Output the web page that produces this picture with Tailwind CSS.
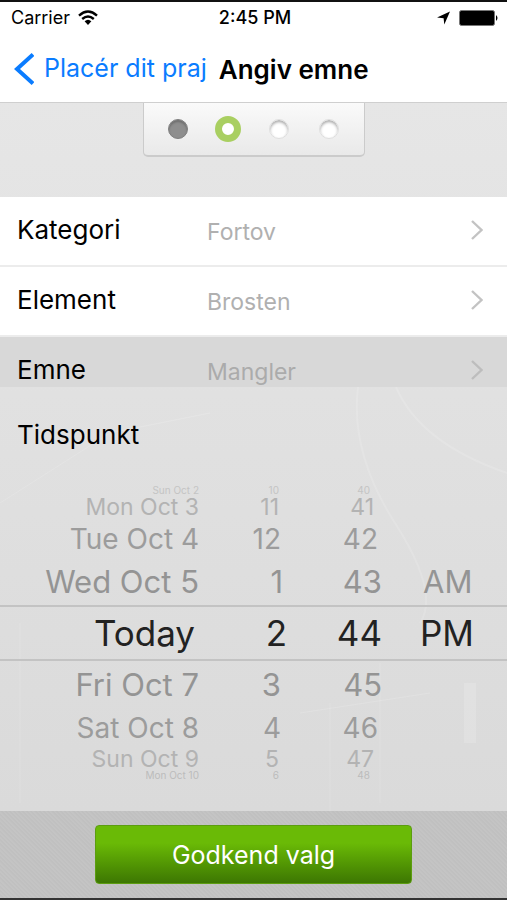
<!DOCTYPE html>
<html lang="da">
<head>
<meta charset="utf-8">
<meta name="viewport" content="width=device-width, initial-scale=1">
<title>Angiv emne</title>
<script src="https://cdn.jsdelivr.net/npm/@tailwindcss/browser@4"></script>
</head>
<body class="flex min-h-screen flex-col border-y-2 border-t-[#111] border-b-[#333] bg-[#dedede] font-['Inter',sans-serif] text-black">
<header class="border-b border-[#cfcfcf] bg-white">
  <div class="grid h-8 grid-cols-3 items-center pr-2 pl-[11px] text-[18px] leading-8">
    <div class="flex items-center gap-2">
      <span>Carrier</span>
      <svg class="h-4 w-5" viewBox="0 0 20 16" fill="none" stroke="#000" stroke-width="2.4" aria-label="Wi-Fi"><path d="M1 5.6Q10-2.4 19 5.6M4.2 9Q10 4 15.8 9"/><path d="M6.6 11.2Q10 8.2 13.4 11.2L10 15Z" fill="#000" stroke="none"/></svg>
    </div>
    <span class="text-center font-medium whitespace-nowrap">2:45 PM</span>
    <div class="flex items-center justify-end gap-2">
      <svg class="h-4 w-4" viewBox="0 0 16 16" aria-label="Lokation"><path d="M15 1.5L9.3 14.5L8.6 8.2L2 7.6Z"/></svg>
      <svg class="h-4 w-10" viewBox="0 0 40 16" aria-label="Batteri"><rect x=".5" y=".5" width="35" height="15" rx="2" stroke="#777"/><path d="M37 5q3 3 0 6z"/></svg>
    </div>
  </div>
  <nav class="flex h-[68px] items-center gap-3 pt-[2px] pl-[14px] whitespace-nowrap">
    <a href="#" class="flex items-center gap-[10px] text-[25px] text-[#0a7cff]">
      <svg class="h-8 w-5" viewBox="0 0 20 32" fill="none" stroke="currentColor" stroke-width="4"><path d="M19 1.5L3 16L19 30.5"/></svg>
      Placér dit praj
    </a>
    <h1 class="text-[26px] font-semibold">Angiv emne</h1>
  </nav>
</header>

<main class="relative isolate flex flex-1 flex-col bg-linear-to-b from-[#e6e6e6] to-[#dadada]">
  <svg class="absolute inset-0 -z-10 h-full w-full" viewBox="0 0 507 708" preserveAspectRatio="none" fill="none" stroke="#fff" stroke-opacity=".14" aria-hidden="true">
    <path d="M396 284Q420 340 507 370M358 284Q350 350 395 420T420 520" stroke-width="2"/>
    <path d="M0 400L110 330L210 310M300 610L430 590M380 560V700M330 600V708M20 520V700"/>
    <path d="M470 580V640" stroke-width="12"/>
  </svg>

  <div class="h-[94px]">
    <ol class="mx-auto flex h-[54px] w-[222px] items-center justify-between rounded-b-[5px] border border-t-0 border-b-2 border-[#cbcbcb] bg-linear-to-b from-[#fafafa] to-[#e9e9e9] px-[21px]" aria-label="Trin 2 af 4">
      <li class="flex w-[26px] justify-center"><span class="size-5 rounded-full border border-[#808080] bg-[#8e8e8e] shadow-[inset_0_2px_2px_#707070]"></span></li>
      <li class="flex w-[26px] justify-center"><span class="size-[26px] rounded-full border-[7px] border-[#a9cf61] bg-white"></span></li>
      <li class="flex w-[26px] justify-center"><span class="size-5 rounded-full border border-[#dedede] bg-white shadow-[inset_0_2px_3px_#aaa]"></span></li>
      <li class="flex w-[26px] justify-center"><span class="size-5 rounded-full border border-[#dedede] bg-white shadow-[inset_0_2px_3px_#aaa]"></span></li>
    </ol>
  </div>

  <div class="text-[26px] leading-8">
    <a href="#" class="flex h-[70px] items-center border-b-2 border-[#ececec] bg-white pr-6 pb-[2px] pl-[17px]">
      <span class="w-[190px]">Kategori</span>
      <span class="flex-1 pt-1 text-[23px] text-[#b0b0b0]">Fortov</span>
      <svg class="h-5 w-3" viewBox="0 0 12 20" fill="none" stroke="#c3c3c3" stroke-width="2.4"><path d="M1 1L10.5 10L1 19"/></svg>
    </a>
    <a href="#" class="flex h-[70px] items-center border-b-2 border-[#ececec] bg-white pr-6 pb-[2px] pl-[17px]">
      <span class="w-[190px]">Element</span>
      <span class="flex-1 pt-1 text-[23px] text-[#b0b0b0]">Brosten</span>
      <svg class="h-5 w-3" viewBox="0 0 12 20" fill="none" stroke="#c3c3c3" stroke-width="2.4"><path d="M1 1L10.5 10L1 19"/></svg>
    </a>
    <div class="h-[50px] overflow-hidden bg-[#d8d8d8]">
      <a href="#" class="flex h-[68px] items-center pr-6 pb-[2px] pl-[17px]">
        <span class="w-[190px]">Emne</span>
        <span class="flex-1 pt-1 text-[23px] text-[#ababab]">Mangler</span>
        <svg class="h-5 w-3" viewBox="0 0 12 20" fill="none" stroke="#bdbdbd" stroke-width="2.4"><path d="M1 1L10.5 10L1 19"/></svg>
      </a>
    </div>
  </div>

  <section class="flex-1 pb-[30px]">
    <h2 class="pt-8 pb-[35px] pl-[17px] text-[26px] leading-8" id="when">Tidspunkt</h2>
    <div class="grid grid-cols-[199fr_84fr_99fr_125fr] text-right whitespace-nowrap text-[#949494]" role="group" aria-labelledby="when">
      <ul role="listbox" aria-label="Dato">
        <li role="option" class="h-2 text-[10px] leading-2 text-[#c4c4c4]">Sun Oct 2</li>
        <li role="option" class="h-[26px] text-[23px] leading-[26px] text-[#b3b3b3]">Mon Oct 3</li>
        <li role="option" class="h-[38px] text-[28px] leading-[38px] text-[#9c9c9c]">Tue Oct 4</li>
        <li role="option" class="h-[47px] text-[31px] leading-[47px]">Wed Oct 5</li>
        <li role="option" aria-selected="true" class="h-14 border-y-2 border-[#c3c3c3] pr-1 text-[35px] leading-[52px] text-[#222]">Today</li>
        <li role="option" class="h-[47px] text-[31px] leading-[47px]">Fri Oct 7</li>
        <li role="option" class="h-[40px] text-[28px] leading-[40px] text-[#9c9c9c]">Sat Oct 8</li>
        <li role="option" class="h-[23px] text-[23px] leading-[23px] text-[#b3b3b3]">Sun Oct 9</li>
        <li role="option" class="h-2 text-[10px] leading-2 text-[#bcbcbc]">Mon Oct 10</li>
      </ul>
      <ul role="listbox" aria-label="Time">
        <li role="option" class="h-2 pr-1 text-[10px] leading-2 text-[#c4c4c4]">10</li>
        <li role="option" class="h-[26px] pr-1 text-[23px] leading-[26px] text-[#b3b3b3]">11</li>
        <li role="option" class="h-[38px] pr-[2px] text-[28px] leading-[38px] text-[#9c9c9c]">12</li>
        <li role="option" class="h-[47px] text-[31px] leading-[47px]">1</li>
        <li role="option" aria-selected="true" class="-mr-1 h-14 border-y-2 border-[#c3c3c3] text-[35px] leading-[52px] text-[#222]">2</li>
        <li role="option" class="h-[47px] pr-[2px] text-[31px] leading-[47px]">3</li>
        <li role="option" class="h-[40px] pr-[2px] text-[28px] leading-[40px] text-[#9c9c9c]">4</li>
        <li role="option" class="h-[23px] pr-1 text-[23px] leading-[23px] text-[#b3b3b3]">5</li>
        <li role="option" class="h-2 pr-1 text-[10px] leading-2 text-[#bcbcbc]">6</li>
      </ul>
      <ul role="listbox" aria-label="Minut">
        <li role="option" class="h-2 pr-3 text-[10px] leading-2 text-[#c4c4c4]">40</li>
        <li role="option" class="h-[26px] pr-2 text-[23px] leading-[26px] text-[#b3b3b3]">41</li>
        <li role="option" class="h-[38px] pr-1 text-[28px] leading-[38px] text-[#9c9c9c]">42</li>
        <li role="option" class="h-[47px] text-[31px] leading-[47px]">43</li>
        <li role="option" aria-selected="true" class="h-14 border-y-2 border-[#c3c3c3] text-[35px] leading-[52px] text-[#222]">44</li>
        <li role="option" class="h-[47px] text-[31px] leading-[47px]">45</li>
        <li role="option" class="h-[40px] pr-1 text-[28px] leading-[40px] text-[#9c9c9c]">46</li>
        <li role="option" class="h-[23px] pr-2 text-[23px] leading-[23px] text-[#b3b3b3]">47</li>
        <li role="option" class="h-2 pr-3 text-[10px] leading-2 text-[#bcbcbc]">48</li>
      </ul>
      <ul role="listbox" aria-label="AM eller PM" class="pt-[72px] text-left">
        <li role="option" class="h-[47px] pl-[41px] text-[31px] leading-[47px]">AM</li>
        <li role="option" aria-selected="true" class="h-14 border-y-2 border-[#c3c3c3] pl-[38px] text-[35px] leading-[52px] text-[#222]">PM</li>
      </ul>
    </div>
  </section>
</main>

<footer class="bg-[#c2c2c2] bg-[repeating-linear-gradient(45deg,#c4c4c4_0px,#c4c4c4_1px,#c0c0c0_2px,#c0c0c0_3px)] px-[95px] py-[14px]">
  <button type="button" class="h-[59px] w-full rounded-[4px] border border-[#5c9d10] bg-linear-to-b from-[#6aba06] from-30% to-[#3d7702] pt-[2px] text-[25px] text-white">Godkend valg</button>
</footer>
</body>
</html>
